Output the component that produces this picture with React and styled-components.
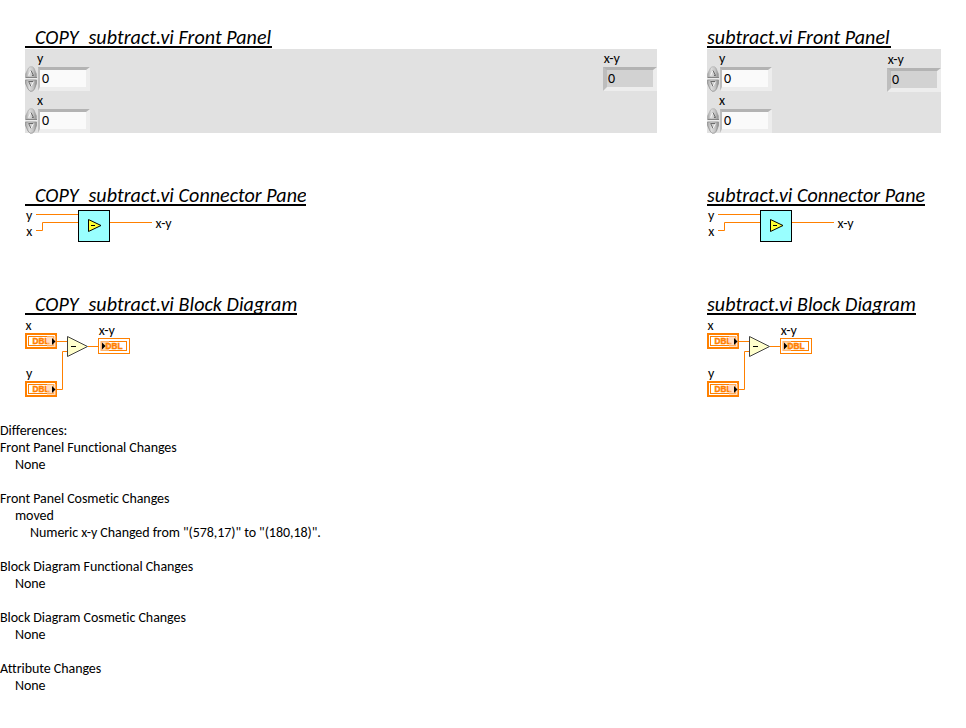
import React from 'react';
import styled, { createGlobalStyle } from 'styled-components';

const GlobalStyle = createGlobalStyle`
  body {
    margin: 0;
    background: #fff;
    color: #000;
    font-family: Carlito, Lato, sans-serif;
    font-size: 14px;
    font-variant-ligatures: none;
  }
`;

const Page = styled.main`
  width: 966px;
  height: 728px;
  overflow: hidden;
`;

const Comparison = styled.div`
  display: grid;
  grid-template-columns: 632px 234px;
  column-gap: 50px;
  padding: 25px 0 0 25px;
  height: 397px;
`;

const Column = styled.section`
  display: grid;
  grid-template-rows: 158px 109px 1fr;
  justify-items: start;
`;

const Section = styled.div`
  display: flex;
  flex-direction: column;
  align-items: flex-start;
  width: 100%;
`;

const Title = styled.h2`
  margin: 0;
  box-sizing: border-box;
  width: ${(p) => p.$width}px;
  height: 23px;
  border-bottom: 2px solid #000;
  overflow: hidden;
  white-space: nowrap;
  font-size: 20px;
  font-style: italic;
  font-weight: 400;
  line-height: 25px;
  letter-spacing: 0.05px;
`;

const FrontPanelArea = styled.div`
  display: flex;
  justify-content: space-between;
  box-sizing: border-box;
  width: 100%;
  height: 84px;
  margin-top: 1px;
  background: #e1e1e1;
`;

const Controls = styled.div`
  display: flex;
  flex-direction: column;
`;

const ControlBlock = styled.div`
  height: 42px;
`;

const Label = styled.div`
  height: 18px;
  line-height: 19px;
  padding-left: ${(p) => p.$indent || 0}px;
`;

const ControlRow = styled.div`
  display: flex;
  align-items: flex-start;
`;

const SpinnerIcon = styled.svg`
  display: block;
  flex: none;
  margin-top: -1px;
`;

const NumberField = styled.div`
  box-sizing: border-box;
  width: ${(p) => (p.$readOnly ? 54 : 52)}px;
  height: 24px;
  border-style: solid;
  border-width: 3px 4px 4px ${(p) => (p.$readOnly ? 4 : 2)}px;
  border-color: #b3b3b3 #ededed #ededed #bdbdbd;
  background: ${(p) => (p.$readOnly ? '#d2d2d2' : '#fafafa')};
  line-height: 18px;
  padding-left: ${(p) => (p.$readOnly ? 1 : 2)}px;
`;

const Indicator = styled.div`
  width: 54px;
  padding-top: ${(p) => p.$drop}px;
`;

const Drawing = styled.svg`
  display: block;
  overflow: visible;
`;

const DrawingText = styled.text`
  font-size: 14px;
  fill: #000;
`;

const TypeText = styled.text`
  font-family: 'Liberation Sans', sans-serif;
  font-size: 8.4px;
  font-weight: 700;
  fill: #ff8000;
  stroke: #ff8000;
  stroke-width: 0.5px;
`;

const Report = styled.section`
  line-height: 17px;
  letter-spacing: -0.06px;
`;

const ReportLine = styled.div`
  height: 17px;
  padding-left: ${(p) => p.$level * 15}px;
  white-space: pre;
`;

function Spinner() {
  return (
    <SpinnerIcon width="13" height="26" viewBox="0 0 13 26">
      <defs>
        <linearGradient id="metal" x1="0" x2="1" y1="0" y2="0">
          <stop offset="0" stopColor="#a4a4a4" />
          <stop offset="0.35" stopColor="#dcdcdc" />
          <stop offset="0.7" stopColor="#c4c4c4" />
          <stop offset="1" stopColor="#8c8c8c" />
        </linearGradient>
      </defs>
      <path d="M0.5 11V8L3.500 2L5 0.8H7.500L9 2L11.500 8V11Z" fill="url(#metal)" stroke="#a8a8a8" strokeWidth="0.6" />
      <path d="M0.5 14V17.500L3 23L5 25.200H7.500L9.500 23L11.500 17.500V14Z" fill="url(#metal)" stroke="#8c8c8c" strokeWidth="0.7" />
      <path d="M0.5 11.500H12" stroke="#858585" />
      <path d="M0 12.500H12.500" stroke="#ececec" />
      <path d="M3.500 9.500L6 4.500" fill="none" stroke="#f4f4f4" />
      <path d="M6 4.500L8.500 9.500H7" fill="none" stroke="#606060" strokeWidth="0.9" />
      <path d="M8.500 15.500H3.700L6 20.500" fill="none" stroke="#606060" strokeWidth="0.9" />
      <path d="M6 20.500L8.500 15.500" fill="none" stroke="#f4f4f4" />
    </SpinnerIcon>
  );
}

function NumericControl({ label }) {
  return (
    <ControlBlock>
      <Label $indent={12}>{label}</Label>
      <ControlRow>
        <Spinner />
        <NumberField>0</NumberField>
      </ControlRow>
    </ControlBlock>
  );
}

function FrontPanel({ drop }) {
  return (
    <FrontPanelArea>
      <Controls>
        <NumericControl label="y" />
        <NumericControl label="x" />
      </Controls>
      <Indicator $drop={drop}>
        <Label $indent={0.7}>x-y</Label>
        <NumberField $readOnly>0</NumberField>
      </Indicator>
    </FrontPanelArea>
  );
}

function ConnectorPane() {
  return (
    <Drawing width="160" height="40" viewBox="25 206 160 40">
      <path d="M36 214.500H78M36 230.500H42.500V222.500H78M110 222.500H152" fill="none" stroke="#ff8000" />
      <rect x="78.500" y="210.500" width="31" height="31" fill="#99ffff" stroke="#000" />
      <path d="M88.500 219.500V231.500L101 225.500Z" fill="#ffff33" stroke="#000" />
      <path d="M91 225.500H95" stroke="#000" />
      <DrawingText x="26" y="220">y</DrawingText>
      <DrawingText x="26.300" y="236">x</DrawingText>
      <DrawingText x="155.500" y="228">x-y</DrawingText>
    </Drawing>
  );
}

function InputTerminal({ y }) {
  return (
    <g>
      <rect x="26" y={y + 1} width="30" height="14" fill="#fff" stroke="#ff8000" strokeWidth="2" />
      <rect x="28.500" y={y + 3.5} width="25" height="9" fill="#fff" stroke="#ff8000" />
      <TypeText x="32.500" y={y + 11} textLength="17" lengthAdjust="spacingAndGlyphs">DBL</TypeText>
      <rect x="47" y={y + 3} width="9" height="11" fill="#ffc896" fillOpacity="0.6" />
      <path d={`M52 ${y + 5}V${y + 12}L55.5 ${y + 8.5}Z`} fill="#000" />
    </g>
  );
}

function BlockDiagram() {
  return (
    <Drawing width="120" height="90" viewBox="25 315 120 90">
      <path d="M57 341.500H67M57 389.500H62.500V351.500H67M88 346.500H98" fill="none" stroke="#ff8000" />
      <InputTerminal y={333} />
      <InputTerminal y={381} />
      <path d="M67.500 336.500V356.500L87.500 346.500Z" fill="#ffffcc" stroke="#404040" />
      <path d="M71 346.500H76" stroke="#000" />
      <rect x="98.500" y="338.500" width="31" height="15" fill="#fff" stroke="#ff8000" />
      <rect x="101.500" y="341.500" width="25" height="9" fill="#fff" stroke="#ff8000" />
      <rect x="100" y="341" width="9" height="10" fill="#ffc896" fillOpacity="0.75" />
      <TypeText x="105.500" y="349" textLength="17" lengthAdjust="spacingAndGlyphs">DBL</TypeText>
      <path d="M102 342.500V349.500L105.500 346Z" fill="#000" />
      <DrawingText x="25.500" y="330">x</DrawingText>
      <DrawingText x="26" y="378">y</DrawingText>
      <DrawingText x="98.700" y="335">x-y</DrawingText>
    </Drawing>
  );
}

function ViColumn({ name, widths, drop }) {
  return (
    <Column>
      <Section>
        <Title $width={widths[0]}>{name} Front Panel</Title>
        <FrontPanel drop={drop} />
      </Section>
      <Section>
        <Title $width={widths[1]}>{name} Connector Pane</Title>
        <ConnectorPane />
      </Section>
      <Section>
        <Title $width={widths[2]}>{name} Block Diagram</Title>
        <BlockDiagram />
      </Section>
    </Column>
  );
}

const reportLines = [
  [0, 'Differences:'],
  [0, 'Front Panel Functional Changes'],
  [1, 'None'],
  [0, ''],
  [0, 'Front Panel Cosmetic Changes'],
  [1, 'moved'],
  [2, 'Numeric x-y Changed from "(578,17)" to "(180,18)".'],
  [0, ''],
  [0, 'Block Diagram Functional Changes'],
  [1, 'None'],
  [0, ''],
  [0, 'Block Diagram Cosmetic Changes'],
  [1, 'None'],
  [0, ''],
  [0, 'Attribute Changes'],
  [1, 'None'],
];

export default function App() {
  return (
    <Page>
      <GlobalStyle />
      <Comparison>
        <ViColumn name="_COPY_subtract.vi" widths={[247, 281, 272]} drop={0} />
        <ViColumn name="subtract.vi" widths={[184, 218, 209]} drop={1} />
      </Comparison>
      <Report>
        {reportLines.map(([level, text], i) => (
          <ReportLine key={i} $level={level}>{text}</ReportLine>
        ))}
      </Report>
    </Page>
  );
}
